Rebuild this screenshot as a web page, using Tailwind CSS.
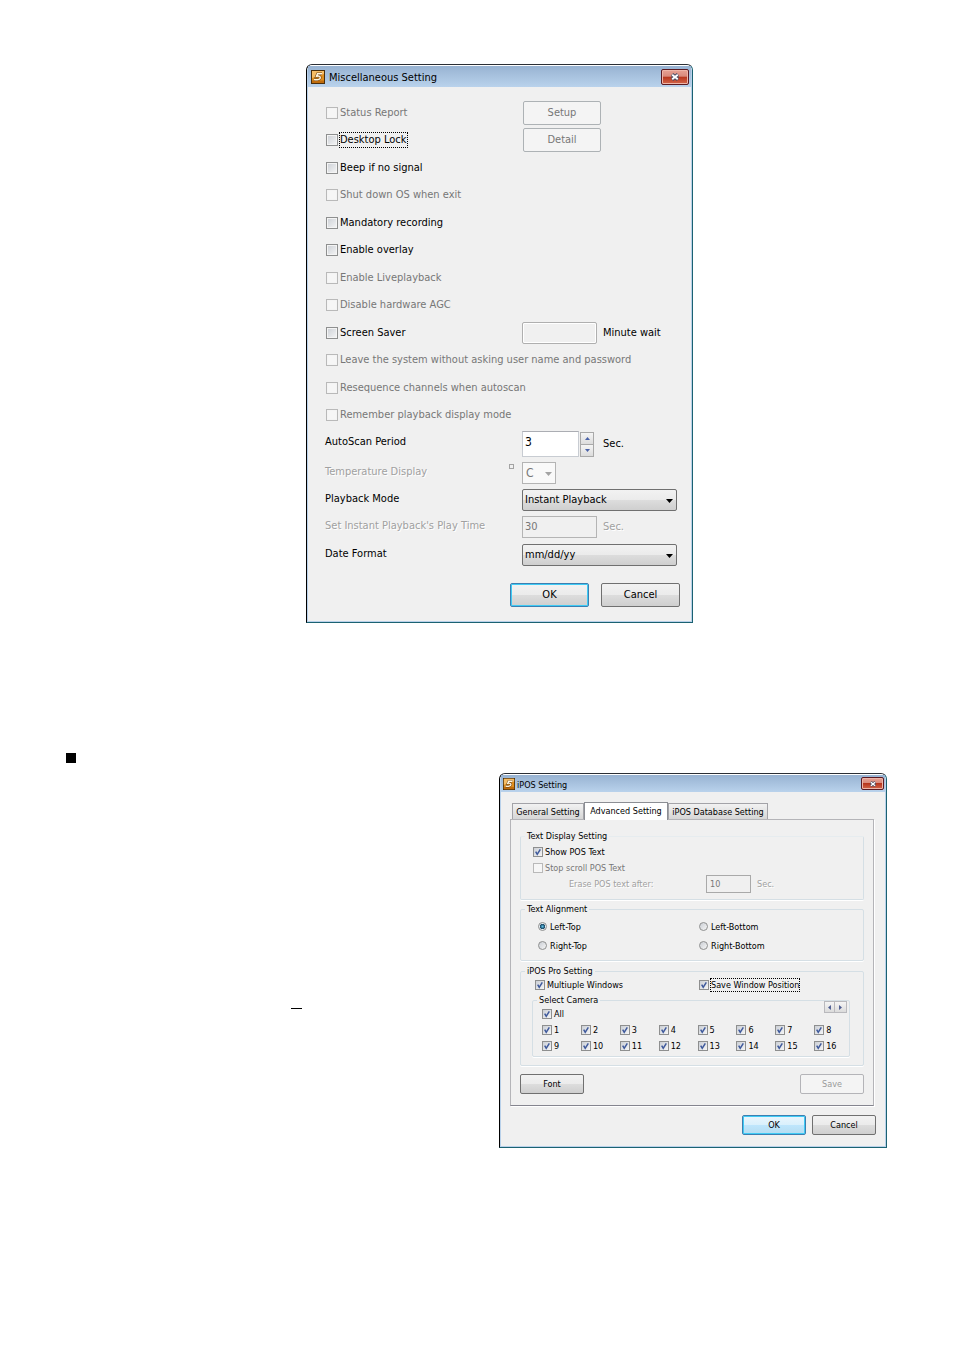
<!DOCTYPE html>
<html lang="en">
<head>
    <meta charset="UTF-8">
    <meta name="viewport" content="width=device-width, initial-scale=1.0">
    <title>Miscellaneous and iPOS Setting</title>
    <script src="https://cdn.jsdelivr.net/npm/@tailwindcss/browser@4"></script>
</head>
<body class="bg-white text-black font-['DejaVu_Sans_Condensed','DejaVu_Sans',sans-serif]">

    <!-- Shared symbols -->
    <svg class="hidden">
        <symbol id="tick" viewBox="0 0 13 13">
            <path d="M3.5 6l2 3.5 4-6.5" fill="none" stroke="#3f5a9c" stroke-width="2"/>
        </symbol>
        <symbol id="logo" viewBox="0 0 14 14">
            <rect width="14" height="14" fill="#4a2f0c"/>
            <rect x="1" y="1" width="12" height="12" fill="#e08f1e"/>
            <path d="M1 1h12v3L1 8z" fill="#f5bd66"/>
            <path d="M1 10.500h12V13H1z" fill="#c06c0c"/>
            <path d="M11 3.800H6.500L5.500 6.300c2-.5 4-.2 3.800 1.500-.2 1.900-3.300 2.300-6.300 1.800" fill="none" stroke="#6b3c08" stroke-width="2.600"/>
            <path d="M11 3.800H6.500L5.500 6.300c2-.5 4-.2 3.800 1.500-.2 1.900-3.300 2.300-6.300 1.800" fill="none" stroke="#fff6e0" stroke-width="1.500"/>
        </symbol>
        <symbol id="cross" viewBox="0 0 10 8">
            <path d="M2 1.500l6 5M8 1.500l-6 5" stroke="#4a4f66" stroke-width="3.600"/>
            <path d="M2.200 1.700l5.600 4.600M7.800 1.700l-5.600 4.600" stroke="#fff" stroke-width="1.800"/>
        </symbol>
        <symbol id="down" viewBox="0 0 7 4">
            <path d="M0 0h7L3.500 4z" fill="currentColor"/>
        </symbol>
    </svg>

    <main class="pt-16">

        <!-- Miscellaneous Setting -->
        <section class="ml-[306px] w-full max-w-[387px] rounded-t-md border border-t-[#2b2f36] border-l-black border-r-[#1b6272] border-b-[#1b6272] bg-[#f0f0f0] text-[11px] leading-4">
            <div class="rounded-t-md border border-t-white border-x-[#b9d1ea] border-b-[#b9d1ea]">
                <header class="flex h-[21px] items-center bg-linear-to-b from-[#98b3d2] to-[#b9d2ec] pl-[3px] pr-[2px]">
                    <svg class="size-[14px]"><use href="#logo"/></svg>
                    <h1 class="grow pl-1 pt-0.5">Miscellaneous Setting</h1>
                    <button aria-label="Close" class="flex h-4 w-7 items-center justify-center rounded-xs border border-[#5b1a22] bg-[linear-gradient(#e8a294,#d98a7c_45%,#b8361d_50%,#d2664b)] shadow-[inset_0_0_0_1px_#eeb5a8]">
                        <svg class="h-2 w-2.5"><use href="#cross"/></svg>
                    </button>
                </header>

                <form class="pl-[17px] pr-[11px] pt-3 pb-[14px]">
                    <div id="misc-options" class="grid h-[330px] grid-rows-12"></div>

                    <div class="flex h-[30px] items-center">
                        <label for="autoscan" class="w-[197px] pb-1">AutoScan Period</label>
                        <input id="autoscan" value="3" class="h-[26px] w-[57px] border border-[#c8ccd2] border-t-[#abadb3] bg-white px-0.5 pb-1 text-[12px]">
                        <span class="ml-px flex flex-col">
                            <button type="button" aria-label="Increase" class="flex h-[13px] w-[14px] items-center justify-center border border-[#a9a9a9] bg-linear-to-b from-[#f5f5f5] to-[#dcdcdc] text-[#4a62a8]"><svg class="h-[3px] w-[5px] rotate-180"><use href="#down"/></svg></button>
                            <button type="button" aria-label="Decrease" class="flex h-3 w-[14px] items-center justify-center border border-t-0 border-[#a9a9a9] bg-linear-to-b from-[#f5f5f5] to-[#dcdcdc] text-[#4a62a8]"><svg class="h-[3px] w-[5px]"><use href="#down"/></svg></button>
                        </span>
                        <span class="ml-[9px]">Sec.</span>
                    </div>

                    <div class="flex h-[27px] items-center">
                        <label for="temperature" class="w-[184px] pb-0.5 text-[#a0a0a0] [text-shadow:1px_1px_0_#fff]">Temperature Display</label>
                        <span class="mb-3 mr-2 size-[5px] border border-[#a3a3a3]"></span>
                        <span class="relative">
                            <select id="temperature" disabled class="block h-[22px] w-[34px] appearance-none border border-[#b4b4b4] bg-[#f9f9f9] px-[3px] text-[12px] text-[#777777]"><option>C</option></select>
                            <svg class="pointer-events-none absolute right-1 top-[10px] h-1 w-[7px] text-[#a3a3a3]"><use href="#down"/></svg>
                        </span>
                    </div>

                    <div class="flex h-[27px] items-center">
                        <label for="playback" class="w-[197px] pb-0.5">Playback Mode</label>
                        <span class="relative">
                            <select id="playback" class="block h-[22px] w-[155px] appearance-none rounded-xs border border-[#707070] bg-[linear-gradient(#f2f2f2,#ebebeb_50%,#dddddd_50%,#cfcfcf)] px-0.5"><option>Instant Playback</option></select>
                            <svg class="pointer-events-none absolute right-1 top-[10px] h-1 w-[7px]"><use href="#down"/></svg>
                        </span>
                    </div>

                    <div class="flex h-[28px] items-center">
                        <label for="playtime" class="w-[197px] pb-0.5 text-[#a0a0a0] [text-shadow:1px_1px_0_#fff]">Set Instant Playback's Play Time</label>
                        <input id="playtime" value="30" disabled class="h-[22px] w-[75px] border border-[#b4b4b4] px-0.5 pb-0.5 text-[#777777]">
                        <span class="ml-1.5 text-[#a0a0a0] [text-shadow:1px_1px_0_#fff]">Sec.</span>
                    </div>

                    <div class="flex h-[27px] items-center">
                        <label for="date-format" class="w-[197px] pb-0.5">Date Format</label>
                        <span class="relative">
                            <select id="date-format" class="block h-[22px] w-[155px] appearance-none rounded-xs border border-[#707070] bg-[linear-gradient(#f2f2f2,#ebebeb_50%,#dddddd_50%,#cfcfcf)] px-0.5"><option>mm/dd/yy</option></select>
                            <svg class="pointer-events-none absolute right-1 top-[10px] h-1 w-[7px]"><use href="#down"/></svg>
                        </span>
                    </div>

                    <div class="mt-[15px] flex justify-end gap-3">
                        <button type="button" class="h-6 w-[79px] rounded-xs border border-[#3c7fb1] bg-[linear-gradient(#f2f2f2,#ebebeb_50%,#dddddd_50%,#cfcfcf)] shadow-[inset_0_0_0_1px_#3fcbf5]">OK</button>
                        <button type="button" class="h-6 w-[79px] rounded-xs border border-[#707070] bg-[linear-gradient(#f2f2f2,#ebebeb_50%,#dddddd_50%,#cfcfcf)]">Cancel</button>
                    </div>
                </form>
            </div>
        </section>

        <div class="mt-[130px] flex pl-[66px]">
            <span class="size-[10px] shrink-0 bg-black"></span>
            <span class="ml-[215px] mt-[255px] h-px w-[11px] shrink-0 bg-black"></span>

            <!-- iPOS Setting -->
            <section class="ml-[197px] mt-5 w-full max-w-[388px] rounded-t-md border border-t-[#2b2f36] border-l-black border-r-[#1b6272] border-b-[#1b6272] bg-[#f0f0f0] text-[9px] leading-3">
                <div class="rounded-t-md border border-t-white border-x-[#b9d1ea] border-b-[#b9d1ea]">
                    <header class="flex h-[17px] items-center bg-linear-to-b from-[#98b3d2] to-[#b9d2ec] pl-0.5 pr-px">
                        <svg class="size-3"><use href="#logo"/></svg>
                        <h2 class="grow pl-0.5 pt-0.5">iPOS Setting</h2>
                        <button aria-label="Close" class="flex h-[13px] w-[23px] items-center justify-center rounded-xs border border-[#5b1a22] bg-[linear-gradient(#e8a294,#d98a7c_45%,#b8361d_50%,#d2664b)] shadow-[inset_0_0_0_1px_#eeb5a8]">
                            <svg class="h-1.5 w-2"><use href="#cross"/></svg>
                        </button>
                    </header>

                    <form class="px-[9px] pt-[10px] pb-[11px]">
                        <div role="tablist" class="relative -mb-px flex items-end pl-0.5">
                            <button type="button" role="tab" class="mb-px h-4 w-[72px] whitespace-nowrap border border-b-0 border-[#a3a3a8] bg-linear-to-b from-[#f2f2f2] to-[#d6d6d6]">General Setting</button>
                            <button type="button" role="tab" aria-selected="true" class="h-[18px] w-[84px] whitespace-nowrap border border-b-0 border-[#8c8e94] bg-white pb-0.5">Advanced Setting</button>
                            <button type="button" role="tab" class="mb-px h-4 w-[100px] whitespace-nowrap border border-b-0 border-[#a3a3a8] bg-linear-to-b from-[#f2f2f2] to-[#d6d6d6]">iPOS Database Setting</button>
                        </div>

                        <div class="mr-0.5 border border-[#b4b4b8] border-b-[#85858f] px-[9px] pt-[10px] pb-[11px] shadow-[1px_1px_0_#fff]">
                            <fieldset class="rounded-xs border border-[#d5dfe5] border-t-[#e6ecef] pt-0.5 pb-[7px] pl-3 shadow-[0_1px_0_#fff]">
                                <legend class="-ml-2 px-0.5">Text Display Setting</legend>
                                <div id="text-options"></div>
                                <div class="flex h-4 items-center text-[#a0a0a0] [text-shadow:1px_1px_0_#fff]">
                                    <label for="erase" class="w-[137px] pl-9">Erase POS text after:</label>
                                    <input id="erase" value="10" disabled class="ml-9 h-[18px] w-[45px] border border-[#a9a9a9] px-[3px] text-[#777777]">
                                    <span class="ml-1.5">Sec.</span>
                                </div>
                            </fieldset>

                            <fieldset class="mt-[3px] rounded-xs border border-[#d5dfe5] pt-0.5 pb-[5px] pl-[17px] shadow-[0_1px_0_#fff]">
                                <legend class="-ml-[13px] px-0.5">Text Alignment</legend>
                                <div id="alignments" class="grid grid-cols-[161px_1fr]"></div>
                            </fieldset>

                            <fieldset class="mt-1 rounded-xs border border-[#d5dfe5] pb-2 pl-[11px] pr-[13px] shadow-[0_1px_0_#fff]">
                                <legend class="-ml-[7px] px-0.5">iPOS Pro Setting</legend>
                                <div id="pro-options" class="flex pl-[3px]"></div>
                                <fieldset class="mt-px rounded-xs border border-[#d5dfe5] pb-0.5 pl-[9px] shadow-[0_1px_0_#fff]">
                                    <legend class="-ml-[5px] px-0.5">Select Camera</legend>
                                    <div class="flex justify-between">
                                        <div id="all-cameras"></div>
                                        <span class="-mt-[5px] mr-0.5 flex">
                                            <button type="button" aria-label="Previous" class="flex h-3 w-[11px] items-center justify-center border border-[#b9b9bd] bg-linear-to-b from-[#f5f5f5] to-[#dcdcdc] text-[#4a5a90]"><svg class="h-[3px] w-[5px] rotate-90"><use href="#down"/></svg></button>
                                            <button type="button" aria-label="Next" class="flex h-3 w-[12px] items-center justify-center border border-l-0 border-[#b9b9bd] bg-linear-to-b from-[#f5f5f5] to-[#dcdcdc] text-[#4a5a90]"><svg class="h-[3px] w-[5px] -rotate-90"><use href="#down"/></svg></button>
                                        </span>
                                    </div>
                                    <div id="cameras" class="-mr-1 grid grid-cols-8"></div>
                                </fieldset>
                            </fieldset>

                            <div class="mt-2 flex justify-between">
                                <button type="button" class="h-5 w-16 rounded-xs border border-[#707070] bg-[linear-gradient(#f2f2f2,#ebebeb_50%,#dddddd_50%,#cfcfcf)]">Font</button>
                                <button type="button" disabled class="h-5 w-16 rounded-xs border border-[#b4b4b8] bg-[#f4f4f4] text-[#9a9a9a]">Save</button>
                            </div>
                        </div>

                        <div class="mt-[9px] flex justify-end gap-1.5">
                            <button type="button" class="h-5 w-16 rounded-xs border border-[#3c7fb1] bg-[linear-gradient(#eaf6fd,#d9f0fc_50%,#bee6fd_50%,#b5dcf0)] shadow-[inset_0_0_0_1px_#3fcbf5]">OK</button>
                            <button type="button" class="h-5 w-16 rounded-xs border border-[#707070] bg-[linear-gradient(#f2f2f2,#ebebeb_50%,#dddddd_50%,#cfcfcf)]">Cancel</button>
                        </div>
                    </form>
                </div>
            </section>
        </div>
    </main>

    <script>
        const miscOptions = [
            { id: 'status-report', text: 'Status Report', disabled: true, button: 'Setup' },
            { id: 'desktop-lock', text: 'Desktop Lock', focus: true, button: 'Detail' },
            { id: 'beep', text: 'Beep if no signal' },
            { id: 'shut-down', text: 'Shut down OS when exit', disabled: true },
            { id: 'mandatory', text: 'Mandatory recording' },
            { id: 'overlay', text: 'Enable overlay' },
            { id: 'liveplayback', text: 'Enable Liveplayback', disabled: true },
            { id: 'agc', text: 'Disable hardware AGC', disabled: true },
            { id: 'screen-saver', text: 'Screen Saver', minutes: true },
            { id: 'leave', text: 'Leave the system without asking user name and password', disabled: true },
            { id: 'resequence', text: 'Resequence channels when autoscan', disabled: true },
            { id: 'remember', text: 'Remember playback display mode', disabled: true },
        ];

        document.getElementById('misc-options').innerHTML = miscOptions.map(o => `
            <div class="flex items-center">
                <div class="flex w-[197px] shrink-0 items-center whitespace-nowrap">
                    <input type="checkbox" id="${o.id}" ${o.disabled ? 'disabled' : ''} class="ml-px size-3 shrink-0 appearance-none border border-[#8e8f8f] bg-linear-to-br from-[#cbcfd5] to-[#f6f6f6] shadow-[inset_0_0_0_1px_#f4f4f4] disabled:border-[#b9b9b9] disabled:from-[#f6f6f6]">
                    <label for="${o.id}" class="ml-px border border-dotted leading-[14px] ${o.focus ? 'border-black' : 'border-transparent'} ${o.disabled ? 'text-[#777777]' : ''}">${o.text}</label>
                </div>
                ${o.button ? `<button type="button" disabled class="ml-px h-6 w-[78px] rounded-xs border border-[#adb2b5] bg-[#f4f4f4] text-[#777777]">${o.button}</button>` : ''}
                ${o.minutes ? `<input id="minutes" disabled class="h-[22px] w-[75px] rounded-xs border border-[#afafaf] shadow-[inset_0_0_0_1px_#fff]"><label for="minutes" class="ml-1.5">Minute wait</label>` : ''}
            </div>`).join('');

        function smallCheck(id, text, height, checked, extra = '') {
            return `
            <div class="flex items-center whitespace-nowrap ${height}">
                <span class="relative flex">
                    <input type="checkbox" id="${id}" ${checked ? 'checked' : 'disabled'} class="peer size-[10px] appearance-none border border-[#8e8f8f] bg-linear-to-br from-[#cbcfd5] to-[#f6f6f6] disabled:border-[#b9b9b9] disabled:from-[#f6f6f6]">
                    <svg class="pointer-events-none absolute inset-0 hidden size-[10px] peer-checked:block"><use href="#tick"/></svg>
                </span>
                <label for="${id}" class="ml-px border border-dotted ${extra || 'border-transparent'}">${text}</label>
            </div>`;
        }

        document.getElementById('text-options').innerHTML =
            smallCheck('show-pos', 'Show POS Text', 'h-4', true) +
            smallCheck('stop-scroll', 'Stop scroll POS Text', 'h-4', false, 'border-transparent text-[#777777]');

        document.getElementById('alignments').innerHTML = ['Left-Top', 'Left-Bottom', 'Right-Top', 'Right-Bottom'].map((text, i) => `
            <div class="flex h-[19px] items-center">
                <input type="radio" name="alignment" id="align-${i}" ${i === 0 ? 'checked' : ''} class="size-[9px] appearance-none rounded-full border border-[#8e8f8f] bg-linear-to-br from-[#cbcfd5] to-[#f6f6f6] checked:bg-[radial-gradient(#5fc3e8,#17425f_50%,#e8eef2_60%)]">
                <label for="align-${i}" class="ml-[3px]">${text}</label>
            </div>`).join('');

        document.getElementById('pro-options').innerHTML =
            '<div class="w-[164px]">' + smallCheck('multiple', 'Multiuple Windows', 'h-4', true) + '</div>' +
            smallCheck('save-position', 'Save Window Position', 'h-4', true, 'border-black');

        document.getElementById('all-cameras').innerHTML = smallCheck('all', 'All', 'h-4', true);

        document.getElementById('cameras').innerHTML = Array.from({ length: 16 }, (_, i) =>
            smallCheck(`camera-${i + 1}`, i + 1, 'h-4', true)).join('');
    </script>
</body>
</html>
